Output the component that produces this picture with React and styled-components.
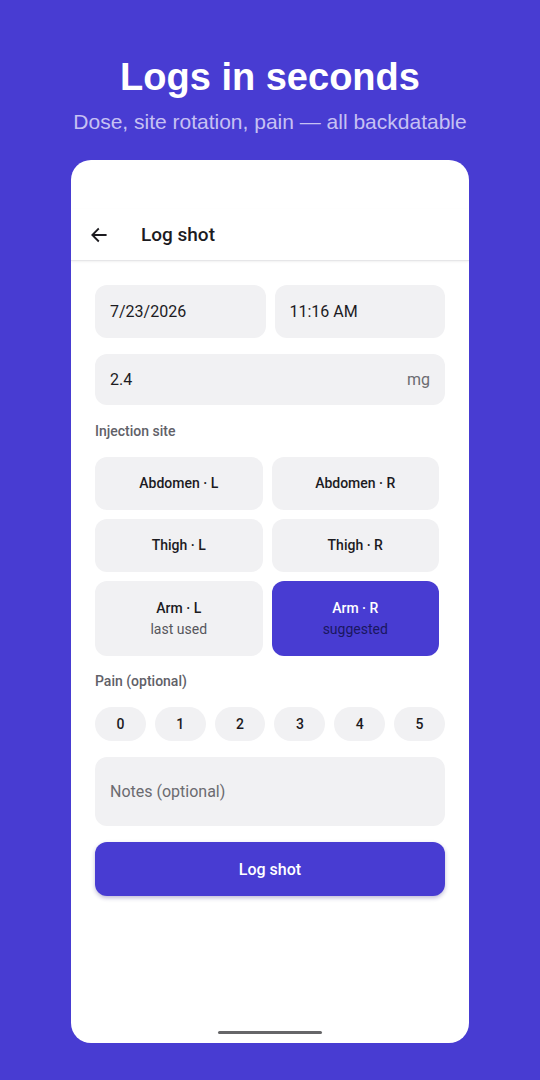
import React from "react";
import styled, { createGlobalStyle } from "styled-components";

const Global = createGlobalStyle`
  html, body {
    margin: 0;
    padding: 0;
    background: #483cd2;
  }
  * { box-sizing: border-box; }
`;

const Page = styled.div`
  width: 540px;
  height: 1080px;
  background: #483cd2;
  display: flex;
  flex-direction: column;
  align-items: center;
  padding-top: 55px;
  font-family: Roboto, "Noto Sans", sans-serif;
`;

const Headline = styled.h1`
  margin: 0;
  font-family: "Liberation Sans", Arial, sans-serif;
  font-size: 38px;
  line-height: 44px;
  font-weight: 700;
  color: #ffffff;
`;

const Subline = styled.p`
  margin: 11px 0 0;
  font-family: "Liberation Sans", Arial, sans-serif;
  font-size: 21px;
  line-height: 24px;
  color: #c6c1f3;
`;

const Phone = styled.div`
  margin-top: 26px;
  width: 398px;
  height: 883px;
  background: #ffffff;
  border-radius: 20px;
  display: flex;
  flex-direction: column;
  overflow: hidden;
`;

const TopBar = styled.div`
  margin-top: 49px;
  height: 52px;
  display: flex;
  align-items: center;
  padding-left: 17px;
  border-bottom: 1px solid #e6e6e8;
  box-shadow: 0 1px 2px rgba(0, 0, 0, 0.06);
`;

const BackButton = styled.div`
  width: 22px;
  height: 22px;
  display: flex;
  align-items: center;
  justify-content: center;
  color: #1c1b1f;
`;

const ScreenTitle = styled.div`
  margin-left: 31px;
  font-size: 19px;
  font-weight: 500;
  color: #1c1b1f;
`;

const Body = styled.div`
  padding: 24px 24px 0;
  display: flex;
  flex-direction: column;
`;

const Row = styled.div`
  display: flex;
  gap: 9px;
`;

const Field = styled.div`
  flex: ${(p) => (p.$grow ? "1 1 0" : "none")};
  height: ${(p) => p.$h || 53}px;
  background: #f1f1f3;
  border-radius: 12px;
  display: flex;
  align-items: center;
  justify-content: space-between;
  padding: 0 15px;
  font-size: 16px;
  color: ${(p) => (p.$muted ? "#6b6b70" : "#1c1b1f")};
  margin-top: ${(p) => p.$mt || 0}px;
`;

const Unit = styled.span`
  color: #6b6b70;
  font-size: 16px;
`;

const Label = styled.div`
  font-size: 14px;
  font-weight: 500;
  color: #616168;
  margin-top: ${(p) => p.$mt}px;
  line-height: 18px;
`;

const SiteGrid = styled.div`
  margin-top: 17px;
  margin-right: 6px;
  display: grid;
  grid-template-columns: 1fr 1fr;
  gap: 9px;
`;

const Site = styled.div`
  height: ${(p) => (p.$tall ? 75 : 53)}px;
  border-radius: 12px;
  background: ${(p) => (p.$active ? "#483cd2" : "#f1f1f3")};
  color: ${(p) => (p.$active ? "#ffffff" : "#1c1b1f")};
  display: flex;
  flex-direction: column;
  align-items: center;
  justify-content: center;
  font-size: 14px;
  font-weight: 500;
  line-height: 21px;
`;

const SiteNote = styled.span`
  font-weight: 400;
  color: ${(p) => (p.$active ? "#1a1760" : "#56565c")};
`;

const PainRow = styled.div`
  margin-top: 17px;
  display: flex;
  gap: 9px;
`;

const PainChip = styled.div`
  flex: 1;
  height: 34px;
  border-radius: 17px;
  background: #f1f1f3;
  display: flex;
  align-items: center;
  justify-content: center;
  font-size: 14px;
  font-weight: 500;
  color: #1c1b1f;
`;

const SubmitButton = styled.div`
  margin-top: 16px;
  height: 54px;
  border-radius: 12px;
  background: #483cd2;
  box-shadow: 0 2px 4px rgba(40, 30, 120, 0.3);
  display: flex;
  align-items: center;
  justify-content: center;
  color: #ffffff;
  font-size: 16px;
  font-weight: 500;
`;

const HomeBar = styled.div`
  margin: auto auto 9px;
  width: 104px;
  height: 3px;
  border-radius: 2px;
  background: #666668;
`;

const sites = [
  { name: "Abdomen · L" },
  { name: "Abdomen · R" },
  { name: "Thigh · L" },
  { name: "Thigh · R" },
  { name: "Arm · L", note: "last used" },
  { name: "Arm · R", note: "suggested", active: true },
];

export default function App() {
  return (
    <>
      <Global />
      <Page>
        <Headline>Logs in seconds</Headline>
        <Subline>Dose, site rotation, pain — all backdatable</Subline>
        <Phone>
          <TopBar>
            <BackButton>
              <svg width="20" height="20" viewBox="0 0 24 24" fill="none" stroke="currentColor" strokeWidth="2.2" strokeLinecap="square">
                <path d="M20 12H5" />
                <path d="M11 5l-7 7 7 7" />
              </svg>
            </BackButton>
            <ScreenTitle>Log shot</ScreenTitle>
          </TopBar>
          <Body>
            <Row>
              <Field $grow>7/23/2026</Field>
              <Field $grow>11:16 AM</Field>
            </Row>
            <Field $mt={16} $h={51}>
              2.4
              <Unit>mg</Unit>
            </Field>
            <Label $mt={17}>Injection site</Label>
            <SiteGrid>
              {sites.map((s) => (
                <Site key={s.name} $tall={!!s.note} $active={s.active}>
                  {s.name}
                  {s.note && <SiteNote $active={s.active}>{s.note}</SiteNote>}
                </Site>
              ))}
            </SiteGrid>
            <Label $mt={16}>Pain (optional)</Label>
            <PainRow>
              {[0, 1, 2, 3, 4, 5].map((n) => (
                <PainChip key={n}>{n}</PainChip>
              ))}
            </PainRow>
            <Field $mt={16} $h={69} $muted>
              Notes (optional)
            </Field>
            <SubmitButton>Log shot</SubmitButton>
          </Body>
          <HomeBar />
        </Phone>
      </Page>
    </>
  );
}
